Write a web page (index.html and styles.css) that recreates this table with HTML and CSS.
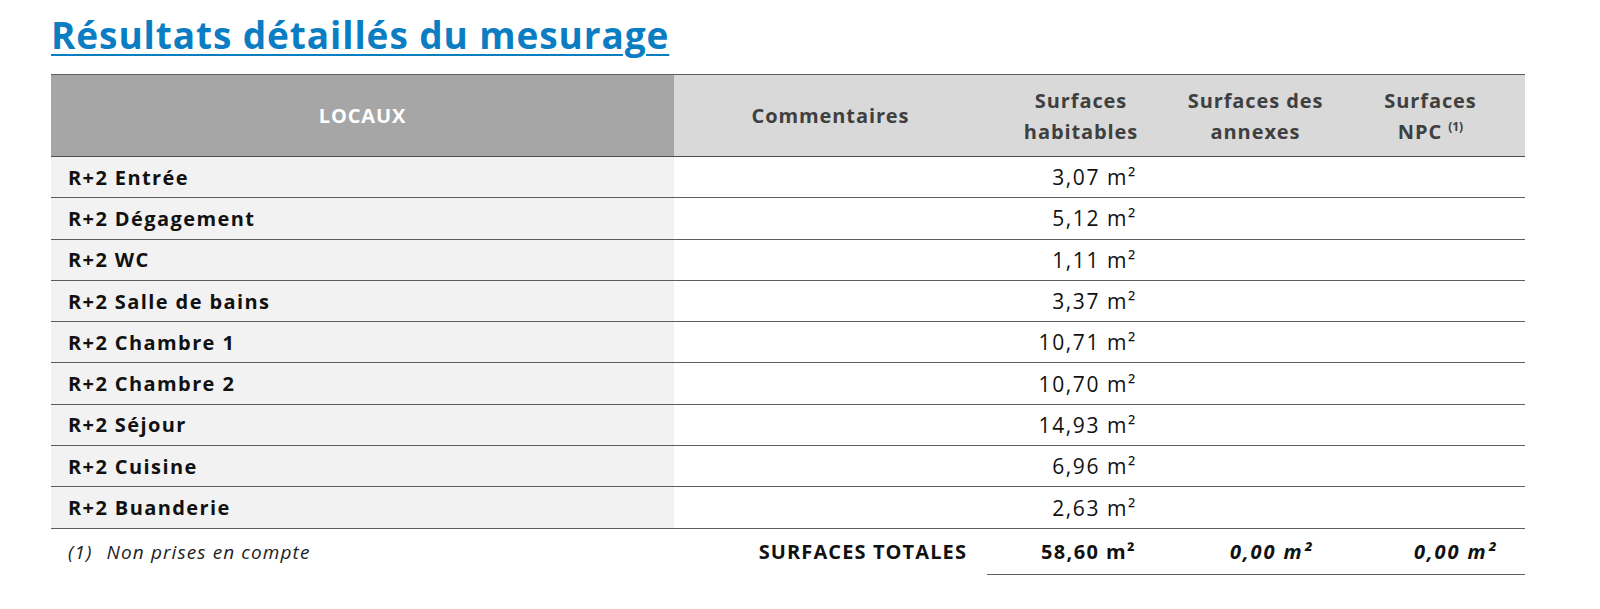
FILE: index.html
```html
<!DOCTYPE html>
<html lang="fr">
<head>
<meta charset="utf-8">
<title>Résultats détaillés du mesurage</title>
<link rel="stylesheet" href="styles.css">
</head>
<body>
<div class="page">
  <h1 class="title">Résultats détaillés du mesurage</h1>
  <div class="table">
    <div class="row head">
      <div class="cell c1"><span>LOCAUX</span></div>
      <div class="cell c2"><span>Commentaires</span></div>
      <div class="cell c3"><span>Surfaces<br>habitables</span></div>
      <div class="cell c4"><span>Surfaces des<br>annexes</span></div>
      <div class="cell c5"><span>Surfaces<br>NPC <sup>(1)</sup></span></div>
    </div>
    <div class="row"><div class="cell c1">R+2 Entrée</div><div class="cell c2"></div><div class="cell c3">3,07 m²</div><div class="cell c4"></div><div class="cell c5"></div></div>
    <div class="row"><div class="cell c1">R+2 Dégagement</div><div class="cell c2"></div><div class="cell c3">5,12 m²</div><div class="cell c4"></div><div class="cell c5"></div></div>
    <div class="row"><div class="cell c1">R+2 WC</div><div class="cell c2"></div><div class="cell c3">1,11 m²</div><div class="cell c4"></div><div class="cell c5"></div></div>
    <div class="row"><div class="cell c1">R+2 Salle de bains</div><div class="cell c2"></div><div class="cell c3">3,37 m²</div><div class="cell c4"></div><div class="cell c5"></div></div>
    <div class="row"><div class="cell c1">R+2 Chambre 1</div><div class="cell c2"></div><div class="cell c3">10,71 m²</div><div class="cell c4"></div><div class="cell c5"></div></div>
    <div class="row"><div class="cell c1">R+2 Chambre 2</div><div class="cell c2"></div><div class="cell c3">10,70 m²</div><div class="cell c4"></div><div class="cell c5"></div></div>
    <div class="row"><div class="cell c1">R+2 Séjour</div><div class="cell c2"></div><div class="cell c3">14,93 m²</div><div class="cell c4"></div><div class="cell c5"></div></div>
    <div class="row"><div class="cell c1">R+2 Cuisine</div><div class="cell c2"></div><div class="cell c3">6,96 m²</div><div class="cell c4"></div><div class="cell c5"></div></div>
    <div class="row"><div class="cell c1">R+2 Buanderie</div><div class="cell c2"></div><div class="cell c3">2,63 m²</div><div class="cell c4"></div><div class="cell c5"></div></div>
    <div class="row foot">
      <div class="cell c1 note"><span class="num">(1)</span><span>Non prises en compte</span></div>
      <div class="cell c2 total-label">SURFACES TOTALES</div>
      <div class="cell c3 total">58,60 m²</div>
      <div class="cell c4 total it">0,00 m²</div>
      <div class="cell c5 total it">0,00 m²</div>
    </div>
  </div>
</div>
</body>
</html>
```

FILE: styles.css
```css
html, body {
  margin: 0;
  padding: 0;
  background: #ffffff;
}

.page {
  padding: 12px 0 0 51px;
  font-family: "Open Sans", Lato, "Liberation Sans", sans-serif;
  color: #111111;
}

.title {
  margin: 0 0 16px 0;
  font-size: 37px;
  font-weight: 700;
  line-height: 46px;
  color: #0b7dc3;
  text-decoration: underline;
  text-decoration-thickness: 2px;
  text-underline-offset: 5px;
  letter-spacing: 0.9px;
}

.table {
  width: 1474px;
}

.row {
  display: grid;
  grid-template-columns: 623px 313px 188px 161px 189px;
  height: 41.3px;
  border-bottom: 1.5px solid #5e5e5e;
  box-sizing: border-box;
}

.cell {
  display: flex;
  align-items: center;
  font-size: 20px;
  font-weight: 700;
  letter-spacing: 1.4px;
}

.row .c1 {
  background: #f2f2f2;
  padding-left: 17px;
}

.row .c3 {
  justify-content: flex-end;
  padding-right: 38px;
  font-size: 21px;
  font-weight: 400;
  letter-spacing: 1.6px;
}

.head {
  height: 83px;
  border-top: 1.5px solid #5e5e5e;
  border-bottom: 1.5px solid #4e4e4e;
}

.head .cell {
  justify-content: center;
  text-align: center;
  color: #3f3f3f;
  background: #d9d9d9;
  line-height: 31px;
  padding: 0;
  font-size: 20px;
  letter-spacing: 0.9px;
}

.head .c1 {
  background: #a6a6a6;
  color: #ffffff;
  padding: 0;
}

.head .c3 {
  padding-right: 0;
  font-weight: 700;
}

.head sup {
  font-size: 12px;
  vertical-align: 8px;
  line-height: 0;
  letter-spacing: 0;
}

.foot {
  height: 46px;
  border-bottom: none;
}

.foot .cell {
  background: transparent;
}

.foot .note {
  font-style: italic;
  font-weight: 400;
  font-size: 19px;
  letter-spacing: 1.1px;
  color: #222222;
  padding-left: 17px;
}

.note .num {
  margin-right: 14px;
}

.foot .total-label {
  justify-content: flex-end;
  padding-right: 20px;
  letter-spacing: 1.1px;
}

.foot .total {
  justify-content: flex-end;
  border-bottom: 1.5px solid #5e5e5e;
  font-size: 20px;
  font-weight: 700;
}

.foot .c3.total {
  padding-right: 39px;
  letter-spacing: 1.4px;
}

.foot .c4.total {
  padding-right: 23px;
  letter-spacing: 1.9px;
}

.foot .c5.total {
  padding-right: 28px;
  letter-spacing: 1.9px;
}

.it {
  font-style: italic;
}
```
